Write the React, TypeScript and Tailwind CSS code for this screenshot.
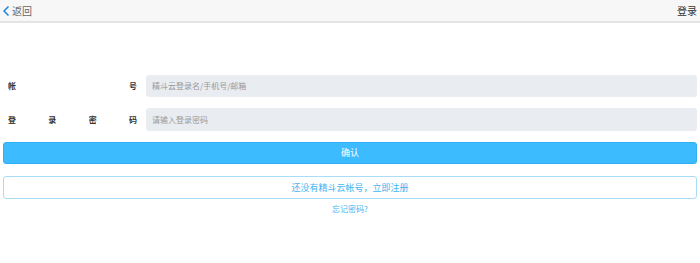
import { ChevronLeft } from "lucide-react";

const font = { fontFamily: '"Noto Sans CJK SC", "Liberation Sans", sans-serif' };

function Label({ chars }: { chars: string[] }) {
  return (
    <div className="flex w-[134px] shrink-0 justify-between pl-[5px] text-[8px] font-bold text-[#333]">
      {chars.map((c, i) => (
        <span key={i}>{c}</span>
      ))}
    </div>
  );
}

export default function App() {
  return (
    <div className="h-[263px] w-[700px] bg-white" style={font}>
      <header className="flex h-[23px] items-center justify-between border-b-2 border-[#e4e4e4] bg-[#f7f7f7] pr-[3px]">
        <button className="flex items-center text-[10px] text-[#666]">
          <ChevronLeft size={16} strokeWidth={2.5} className="-ml-[2px] text-[#1e88e5]" />
          <span className="-ml-[2px]">返回</span>
        </button>
        <span className="text-[10px] text-[#333]">登录</span>
      </header>

      <div className="flex flex-col px-[3px] pt-[52px]">
        <div className="flex items-center">
          <Label chars={["帐", "号"]} />
          <div className="ml-[9px] flex h-[22px] flex-1 items-center rounded-[3px] bg-[#e9ecf1] pl-[6px] text-[8px] text-[#999]">
            精斗云登录名/手机号/邮箱
          </div>
        </div>
        <div className="mt-[11px] flex items-center">
          <Label chars={["登", "录", "密", "码"]} />
          <div className="ml-[9px] flex h-[23px] flex-1 items-center rounded-[3px] bg-[#e9ecf1] pl-[6px] text-[8px] text-[#999]">
            请输入登录密码
          </div>
        </div>

        <button className="mt-[11px] flex h-[22px] items-center justify-center rounded-[3px] border border-[#2fb0f5] bg-[#3dbbff] text-[9px] text-white">
          确认
        </button>
        <button className="mt-[12px] flex h-[23px] items-center justify-center rounded-[3px] border border-[#a9dcf7] bg-white text-[9px] text-[#45b4f0]">
          还没有精斗云帐号，立即注册
        </button>
        <div className="mt-[4px] text-center text-[8px] text-[#45b4f0]">忘记密码?</div>
      </div>
    </div>
  );
}
